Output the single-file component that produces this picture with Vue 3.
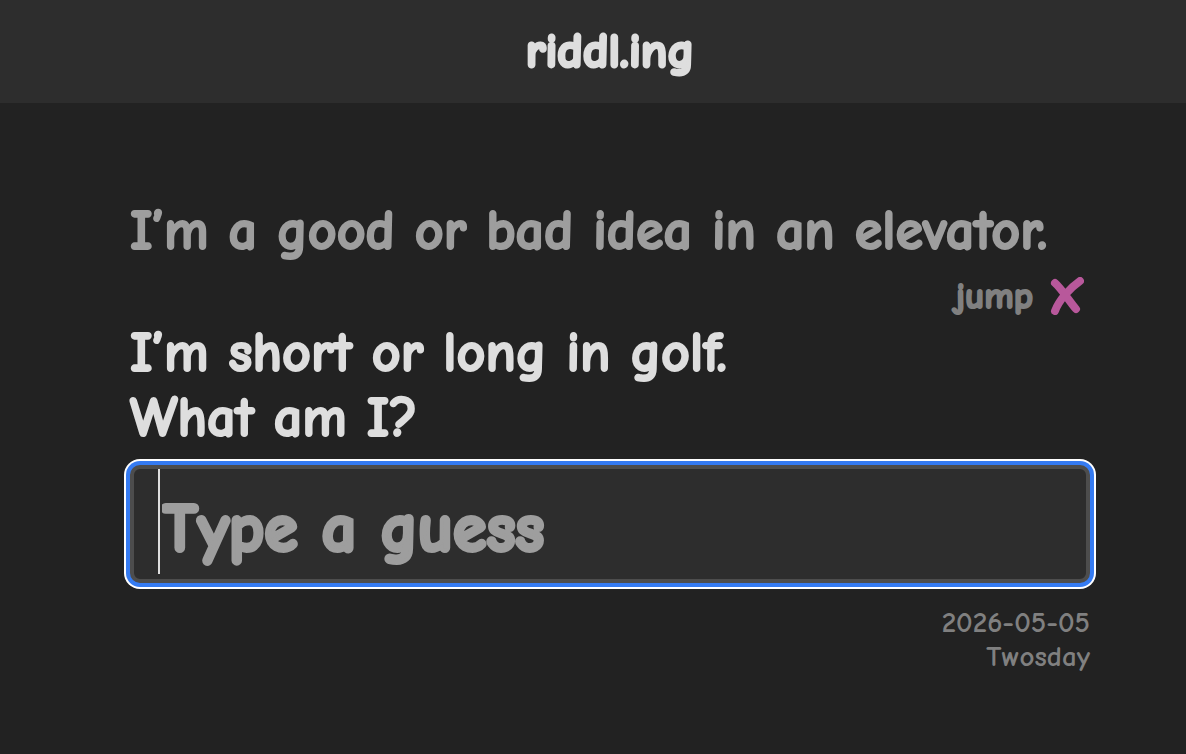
<script setup>
import { ref, onMounted } from 'vue'

const guess = ref('')
const field = ref(null)
onMounted(() => field.value.focus())
</script>

<template>
  <div class="page">
    <header class="bar">
      <h1 class="brand">riddl.ing</h1>
    </header>
    <main class="content">
      <p class="clue past">I’m a good or bad idea in an elevator.</p>
      <p class="answer">
        <span>jump</span>
        <svg class="cross" viewBox="0 0 34 38" aria-label="wrong" role="img">
          <path d="M5 6C11 11 20 25 26 32M30 4C20 11 9 23 5 34" />
        </svg>
      </p>
      <label class="clue" for="guess">I’m short or long in golf.<br />What am I?</label>
      <div class="box">
        <input id="guess" ref="field" v-model="guess" type="text" placeholder="Type a guess" autocomplete="off" />
        <span v-if="!guess" class="caret" aria-hidden="true"></span>
      </div>
      <footer class="meta">
        <time datetime="2026-05-05">2026-05-05</time>
        <span>Twosday</span>
      </footer>
    </main>
  </div>
</template>

<style>
body {
  background: #222222;
}
</style>

<style scoped>
.page {
  min-height: 100vh;
  background: #222222;
  color: #dedede;
  font-family: "Comic Neue", Lato, sans-serif;
}
.bar {
  display: flex;
  justify-content: center;
  padding: 1px 0 2px 34px;
  background: #2d2d2d;
}
.brand {
  margin: 0;
  font-size: 49px;
  line-height: 100px;
  font-weight: 900;
  -webkit-text-stroke: 3px currentColor;
}
.content {
  margin: 0 96px 0 130px;
  padding-top: 96px;
}
.clue {
  display: block;
  margin: 0;
  font-size: 56px;
  line-height: 65px;
  font-weight: 700;
  -webkit-text-stroke: 2px currentColor;
}
.past {
  color: #9e9e9e;
}
.answer {
  display: flex;
  justify-content: flex-end;
  align-items: center;
  gap: 17px;
  margin: 0;
  padding: 7px 6px 0 0;
  color: #808080;
  font-size: 37px;
  line-height: 50px;
  font-weight: 900;
  -webkit-text-stroke: 2px currentColor;
}
.cross {
  width: 34px;
  height: 38px;
  fill: none;
  stroke: #b8589b;
  stroke-width: 8;
  stroke-linecap: round;
}
.box {
  position: relative;
  margin-top: 14px;
}
.caret {
  position: absolute;
  top: 4px;
  left: 28px;
  width: 2px;
  height: 105px;
  background: #dedede;
}
input {
  display: block;
  width: 100%;
  box-sizing: border-box;
  padding: 18px 26px 8px 28px;
  border: 4px solid #4d4d4d;
  border-radius: 10px;
  outline: 0;
  background: #2d2d2d;
  color: #dedede;
  font: 900 68px/84px "Comic Neue", Lato, sans-serif;
  -webkit-text-stroke: 4px currentColor;
  caret-color: transparent;
}
input:focus {
  box-shadow: 0 0 0 4px #357bf2, 0 0 0 6px #ffffff;
}
input::placeholder {
  color: #9e9e9e;
  opacity: 1;
}
.meta {
  display: flex;
  flex-direction: column;
  align-items: flex-end;
  padding-top: 23px;
  color: #808080;
  font-size: 29px;
  line-height: 34px;
  font-weight: 700;
}
</style>
